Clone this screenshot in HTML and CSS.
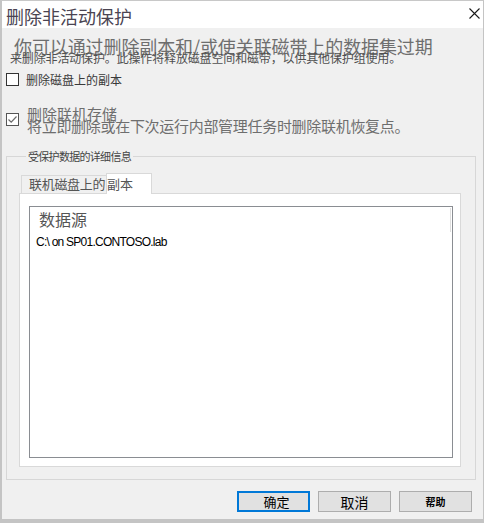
FILE: index.html
```html
<!DOCTYPE html>
<html lang="zh-CN">
<head>
<meta charset="utf-8">
<title>删除非活动保护</title>
<link rel="stylesheet" href="styles.css">
</head>
<body>
<div class="window">
  <div class="titlebar">
    <div class="title">删除非活动保护</div>
    <svg class="close" width="11" height="11" viewBox="0 0 11 11"><path d="M0.5 0.5 L10.5 10.5 M10.5 0.5 L0.5 10.5" stroke="#1a1a1a" stroke-width="1.1" fill="none"/></svg>
  </div>
  <div class="content">
    <div class="intro">
      <div class="intro-big">你可以通过删除副本和/或使关联磁带上的数据集过期</div>
      <div class="intro-small">来删除非活动保护。此操作将释放磁盘空间和磁带，以供其他保护组使用。</div>
    </div>
    <div class="check-row row1">
      <span class="box"></span>
      <span class="label1">删除磁盘上的副本</span>
    </div>
    <div class="check-row row2">
      <span class="box checked"><svg width="11" height="11" viewBox="0 0 11 11"><path d="M1.5 5.5 L4.2 8.2 L9.5 2.5" stroke="#6a6a6a" stroke-width="1.2" fill="none"/></svg></span>
      <div class="label2">
        <div class="l2a">删除联机存储</div>
        <div class="l2b">将立即删除或在下次运行内部管理任务时删除联机恢复点。</div>
      </div>
    </div>
    <fieldset class="group">
      <legend>受保护数据的详细信息</legend>
      <div class="tabs">
        <span class="tab tab-a">联机磁盘上的</span><span class="tab tab-b">副本</span>
      </div>
      <div class="panel">
        <div class="listbox">
          <div class="list-head">数据源</div>
          <div class="list-row">C:\ on SP01.CONTOSO.lab</div>
        </div>
      </div>
    </fieldset>
    <div class="buttons">
      <button class="btn ok"><span class="t-ok">确定</span></button>
      <button class="btn"><span class="t-cancel">取消</span></button>
      <button class="btn"><span class="t-help">帮助</span></button>
    </div>
  </div>
</div>
</body>
</html>
```
FILE: styles.css
```css
* { box-sizing: border-box; }
html, body { margin: 0; padding: 0; }
body {
  background: #f0f0f0;
  font-family: "Noto Sans CJK SC", "Liberation Sans", sans-serif;
}
.window {
  width: 484px;
  height: 523px;
  border-top: 1px solid #c8c8c8;
  border-left: 2px solid #c4c4c4;
  border-right: 1px solid #c4c4c4;
  border-bottom: 4px solid #c4c4c4;
  background: #f0f0f0;
  display: flex;
  flex-direction: column;
}
.titlebar {
  height: 27px;
  background: #ffffff;
  display: flex;
  align-items: flex-start;
}
.title {
  font-size: 18px;
  line-height: 18px;
  padding-top: 6px;
  padding-left: 4px;
  color: #4a4452;
}
.close {
  margin-left: auto;
  margin-right: 3px;
  margin-top: 7px;
}
.content {
  flex: 1;
  display: flex;
  flex-direction: column;
}
.intro {
  padding-top: 9px;
}
.intro-big {
  font-size: 18px;
  line-height: 18px;
  height: 18px;
  padding-left: 12px;
  color: #6e6e6e;
  letter-spacing: -0.1px;
}
.intro-small {
  font-size: 12px;
  line-height: 12px;
  height: 12px;
  margin-top: -3px;
  padding-left: 8px;
  color: #505050;
  letter-spacing: -0.15px;
}
.check-row {
  display: flex;
  padding-left: 4px;
}
.row1 {
  margin-top: 9px;
  align-items: center;
}
.box {
  width: 13px;
  height: 13px;
  border: 1px solid #333333;
  background: #ffffff;
  display: flex;
  align-items: center;
  justify-content: center;
  flex: none;
}
.box.checked {
  border-color: #555555;
  margin-top: 5px;
}
.label1 {
  font-size: 12px;
  line-height: 13px;
  margin-left: 7px;
  color: #3a3a3a;
}
.row2 {
  margin-top: 22px;
}
.label2 {
  margin-left: 8px;
  color: #6e6e6e;
  font-size: 15px;
}
.l2a {
  line-height: 12px;
  height: 12px;
}
.l2b {
  line-height: 12px;
  height: 12px;
  letter-spacing: -0.3px;
}
.group {
  margin: 18px 7px 0 4px;
  padding: 0 0 12px 12px;
  border: 1px solid #d7d7d7;
  height: 330px;
  min-width: 0;
}
.group legend {
  font-size: 11px;
  line-height: 12px;
  padding: 0 2px;
  margin-left: 7px;
  color: #444444;
  letter-spacing: -0.7px;
}
.tabs {
  display: flex;
  align-items: flex-end;
  margin-top: 11px;
  padding-left: 2px;
  font-size: 13px;
  line-height: 16px;
  color: #555555;
}
.tab {
  border: 1px solid #d9d9d9;
  border-bottom: none;
}
.tab-a {
  width: 86px;
  height: 18px;
  padding-left: 7px;
  background: #f0f0f0;
  letter-spacing: -0.3px;
}
.tab-b {
  width: 46px;
  height: 21px;
  margin-left: -1px;
  background: #ffffff;
  padding-top: 2px;
  padding-left: 0;
  position: relative;
  z-index: 1;
  margin-bottom: -1px;
}
.panel {
  width: 442px;
  height: 274px;
  background: #ffffff;
  border: 1px solid #d9d9d9;
  padding: 12px 0 0 9px;
}
.listbox {
  width: 424px;
  height: 252px;
  border: 1px solid #8a8d92;
  background: #ffffff;
}
.list-head {
  height: 24px;
  margin-top: 1px;
  margin-right: 1px;
  padding-left: 9px;
  font-size: 16px;
  line-height: 22px;
  color: #555555;
  border-right: 1px solid #dedede;
}
.list-row {
  padding-left: 6px;
  font-family: "Liberation Sans", Arial, sans-serif;
  font-size: 12px;
  line-height: 14px;
  letter-spacing: -0.75px;
  color: #000000;
  margin-top: 3px;
}
.buttons {
  display: flex;
  justify-content: flex-end;
  gap: 8px;
  margin-top: 11px;
  padding-right: 11px;
}
.btn {
  width: 73px;
  height: 21px;
  background: #e1e1e1;
  border: 1px solid #adadad;
  padding: 0;
  margin: 0;
  font-family: "Noto Sans CJK SC", sans-serif;
  color: #000000;
  display: flex;
  align-items: center;
  justify-content: center;
}
.btn.ok {
  border: 2px solid #0078d7;
}
.t-ok { font-size: 13px; line-height: 14px; margin-left: 6px; }
.t-cancel { font-size: 14px; line-height: 14px; }
.t-help { font-size: 10px; line-height: 12px; font-weight: bold; }
```
